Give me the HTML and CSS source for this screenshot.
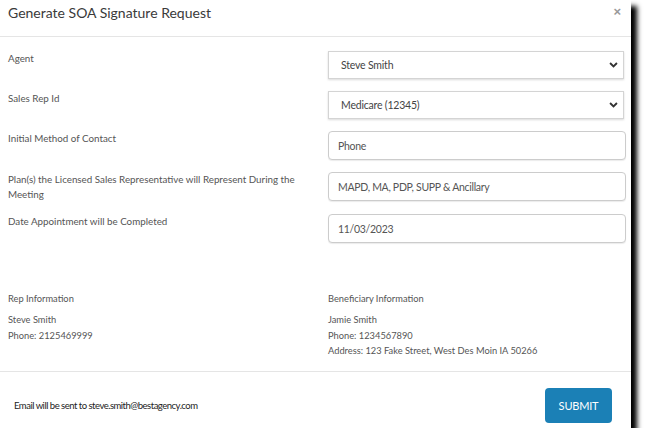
FILE: index.html
```html
<!DOCTYPE html>
<html lang="en">
<head>
    <meta charset="UTF-8">
    <meta name="viewport" content="width=device-width, initial-scale=1.0">
    <title>Generate SOA Signature Request</title>
    <link rel="stylesheet" href="styles.css">
</head>
<body>
    <div class="modal">
        <div class="modal-header">
            <h1>Generate SOA Signature Request</h1>
            <button class="close-btn">&times;</button>
        </div>

        <div class="modal-body">
            <div class="form-grid">
                <label class="field-label">Agent</label>
                <div class="select-wrap">
                    <select class="field-select">
                        <option>Steve Smith</option>
                    </select>
                    <svg class="chevron" viewBox="0 0 10 7" width="9" height="6"><path d="M1 1.2 L5 5.2 L9 1.2" fill="none" stroke="#333" stroke-width="2.2"/></svg>
                </div>

                <label class="field-label">Sales Rep Id</label>
                <div class="select-wrap">
                    <select class="field-select">
                        <option>Medicare (12345)</option>
                    </select>
                    <svg class="chevron" viewBox="0 0 10 7" width="9" height="6"><path d="M1 1.2 L5 5.2 L9 1.2" fill="none" stroke="#333" stroke-width="2.2"/></svg>
                </div>

                <label class="field-label">Initial Method of Contact</label>
                <input class="field-input" type="text" value="Phone">

                <label class="field-label">Plan(s) the Licensed Sales Representative will Represent During the Meeting</label>
                <input class="field-input" type="text" value="MAPD, MA, PDP, SUPP &amp; Ancillary">

                <label class="field-label">Date Appointment will be Completed</label>
                <input class="field-input" type="text" value="11/03/2023">
            </div>

            <div class="info-grid">
                <div class="info-block">
                    <div class="info-title">Rep Information</div>
                    <div class="info-line">Steve Smith</div>
                    <div class="info-line">Phone: 2125469999</div>
                </div>
                <div class="info-block">
                    <div class="info-title">Beneficiary Information</div>
                    <div class="info-line">Jamie Smith</div>
                    <div class="info-line">Phone: 1234567890</div>
                    <div class="info-line">Address: 123 Fake Street, West Des Moin IA 50266</div>
                </div>
            </div>
        </div>

        <div class="modal-footer">
            <span class="email-note">Email will be sent to steve.smith@bestagency.com</span>
            <button class="submit-btn">SUBMIT</button>
        </div>
    </div>
</body>
</html>
```

FILE: styles.css
```css
:root {
    --text: #555;
    --label: #555;
    --border: #ccc;
    --line: #e5e5e5;
    --primary: #1b80b6;
}

body {
    font-family: 'Lato', 'Open Sans', sans-serif;
    margin: 0;
    padding: 0;
    background: white;
    color: var(--text);
}

.modal {
    width: 631px;
    height: 428px;
    background: white;
    box-shadow: 6px 6px 5px #000;
    display: flex;
    flex-direction: column;
}

.modal-header {
    height: 37px;
    box-sizing: border-box;
    padding: 3px 10px 0 8px;
    border-bottom: 1px solid var(--line);
    display: flex;
    justify-content: space-between;
    align-items: flex-start;
}

.modal-header h1 {
    margin: 0;
    font-size: 14px;
    font-weight: normal;
    line-height: 20px;
    color: #3a3a3a;
}

.close-btn {
    border: none;
    background: transparent;
    padding: 0;
    margin-top: 1px;
    font-size: 13px;
    line-height: 16px;
    color: #999;
    font-weight: bold;
    cursor: pointer;
}

.modal-body {
    flex-grow: 1;
    padding: 14px 5px 0 8px;
}

.form-grid {
    display: grid;
    grid-template-columns: 1fr 298px;
    column-gap: 24px;
    row-gap: 12px;
}

.field-label {
    font-size: 9.8px;
    line-height: 15px;
    color: var(--label);
}

.select-wrap {
    position: relative;
    width: 296px;
    height: 28px;
}

.field-select {
    width: 100%;
    height: 28px;
    appearance: none;
    border: 1px solid #d4d4d4;
    border-radius: 0;
    background: white;
    box-shadow: 0 1px 2px rgba(0,0,0,0.15);
    padding: 0 12px;
    font-family: inherit;
    font-size: 10.5px;
    letter-spacing: -0.2px;
    color: #444;
}

.chevron {
    position: absolute;
    right: 6px;
    top: 11px;
    pointer-events: none;
}

.field-input {
    box-sizing: border-box;
    width: 100%;
    height: 29px;
    border: 1px solid var(--border);
    border-radius: 4px;
    box-shadow: 0 1px 1px rgba(0,0,0,0.08);
    padding: 0 9px;
    font-family: inherit;
    font-size: 10.5px;
    letter-spacing: -0.3px;
    color: var(--text);
}

.info-grid {
    display: grid;
    grid-template-columns: 1fr 298px;
    column-gap: 24px;
    margin-top: 48px;
}

.info-title {
    font-size: 9.3px;
    color: var(--label);
    line-height: 15px;
    margin-bottom: 6px;
}

.info-line {
    font-size: 9.3px;
    color: var(--label);
    line-height: 15.5px;
}

.modal-footer {
    height: 57px;
    box-sizing: border-box;
    border-top: 1px solid var(--line);
    display: flex;
    justify-content: space-between;
    align-items: center;
    padding: 11px 19px 0 14px;
}

.email-note {
    font-size: 9.5px;
    letter-spacing: -0.5px;
    color: #222;
}

.submit-btn {
    background: var(--primary);
    color: white;
    border: none;
    border-radius: 4px;
    width: 67px;
    height: 35px;
    font-family: inherit;
    font-size: 11px;
    letter-spacing: -0.2px;
    cursor: pointer;
}
```
